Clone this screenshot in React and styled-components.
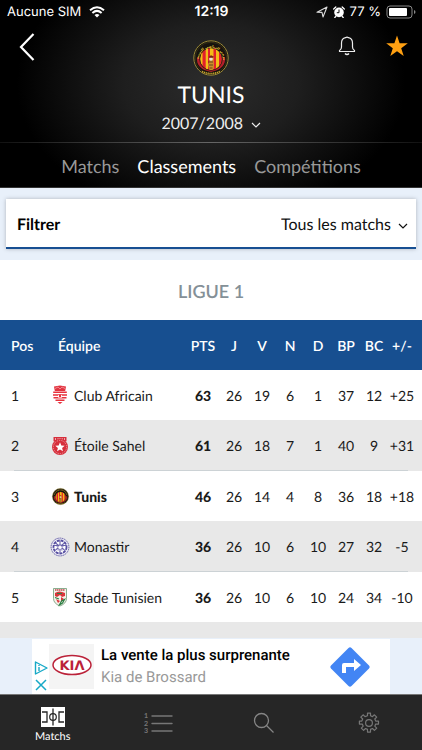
import React from "react";
import { useState } from "react";
import styled, { createGlobalStyle } from "styled-components";

const teams = [
  { pos: 1, name: "Club Africain", crest: "africain", stats: ["26", "19", "6", "1", "37", "12", "+25"], pts: 63 },
  { pos: 2, name: "Étoile Sahel", crest: "sahel", stats: ["26", "18", "7", "1", "40", "9", "+31"], pts: 61 },
  { pos: 3, name: "Tunis", crest: "tunis", stats: ["26", "14", "4", "8", "36", "18", "+18"], pts: 46, current: true },
  { pos: 4, name: "Monastir", crest: "monastir", stats: ["26", "10", "6", "10", "27", "32", "-5"], pts: 36 },
  { pos: 5, name: "Stade Tunisien", crest: "stade", stats: ["26", "10", "6", "10", "24", "34", "-10"], pts: 36 },
];

const tabs = ["Matchs", "Classements", "Compétitions"];
const statHeads = ["J", "V", "N", "D", "BP", "BC", "+/-"];

function StatusIcons() {
  return (
    <StatusRight>
      <svg width="12" height="12" viewBox="0 0 12 12" fill="none" stroke="#ddd" strokeWidth="1.1" strokeLinejoin="round">
        <path d="M1 6.2 11 1 7 11 6 6.4z" />
      </svg>
      <svg width="12" height="12" viewBox="0 0 12 12">
        <circle cx="6" cy="6.4" r="4.8" fill="#fff" />
        <path d="M.7 3 2.8 1M11.3 3 9.2 1M2.8 10.3l-1 1.2M9.2 10.3l1 1.2" stroke="#fff" strokeWidth="1.3" strokeLinecap="round" />
        <path d="M6 3.5v3.2H3.8" stroke="#111" strokeWidth="1" fill="none" />
      </svg>
      <span>77 %</span>
      <svg width="30" height="14" viewBox="0 0 30 14">
        <rect x="1" y="1" width="25" height="12" rx="3" fill="none" stroke="#888" />
        <rect x="3" y="3" width="18" height="8" rx="1" fill="#fff" />
        <path d="M28 5v4q1.500-.5 1.500-2T28 5z" fill="#888" />
      </svg>
    </StatusRight>
  );
}

function TunisCrest({ size, detailed }) {
  return (
    <svg width={size} height={size} viewBox="0 0 36 36" overflow="visible" role="img" aria-label="Tunis">
      <defs>
        <clipPath id={"stripes" + size}><circle cx="18" cy="19" r="11" /></clipPath>
        <path id={"arc" + size} d="M5.600 20a12.400 12.400 0 1 1 24.800 0" />
      </defs>
      <circle cx="18" cy="18" r="17.200" fill="#16130d" stroke="#9b8a38" strokeWidth="1" />
      <circle cx="18" cy="18" r="15.800" fill="none" stroke="#4f4720" strokeWidth=".5" />
      <path d="M4 17c-1 8 4 13 14 15 10-2 15-7 14-15l-3 1H7z" fill="#b3202a" />
      <g clipPath={"url(#stripes" + size + ")"}>
        <path d="M6 7h24v24H6z" fill="#f3bd18" />
        <path d="M9.500 7h3.200v24H9.500zM15 7h2v24h-2zM20.500 7h2.500v24h-2.500zM26 7h3v24h-3z" fill="#e3202b" />
      </g>
      <circle cx="18" cy="19" r="11.300" fill="none" stroke="#16130d" strokeWidth=".8" />
      <path d="M16 18q2-3 4.500 0l-.5 2 1 5-1.500 5h-3L15 25l1.500-4z" fill="#c98f2b" />
      <circle cx="18" cy="19" r="1.800" fill="#ece2d0" />
      <path d="m15.500 17 2.500-1.800 3 1.500-1 1h-3.500z" fill="#792618" />
      <path d="M15 22h5M16 25h4M16.500 28h3" stroke="#51301a" strokeWidth=".8" />
      <path d="M9 31.500q9 4 18 0" stroke="#caa62e" strokeWidth="1.600" strokeDasharray="1.200 .7" fill="none" />
      {detailed ? (
        <text fontSize="3.500" fontWeight="700" fontFamily="DejaVu Sans, sans-serif" fill="#f0cc3c" textAnchor="middle">
          <textPath href={"#arc" + size} startOffset="50%">الترجي الرياضي التونسي</textPath>
        </text>
      ) : (
        <path d="M5 14a13.500 13.500 0 0 1 26 0" stroke="#b8982c" strokeWidth="2" strokeDasharray="2 1" fill="none" />
      )}
    </svg>
  );
}

function Crest({ kind }) {
  if (kind === "tunis") {
    return <TunisCrest size={17} />;
  }
  if (kind === "africain") {
    return (
      <svg width="18" height="20" viewBox="0 0 18 20">
        <path d="M3 1.500 9 .5l6 1-.8 4.500H3.800z" fill="#e23440" />
        <path d="M4 3.500 7 2l2 2 2-2 3 1.500" stroke="#f6aeb2" strokeWidth=".7" fill="none" />
        <path d="M2.200 7.300h13.600M2 10h14M2.500 12.700h13M4.500 15.300h9" stroke="#e8313d" strokeWidth="1.600" />
        <path d="M7 10.200h4v2.400H7z" fill="#fff" />
        <path d="M8 9.500h2V12H8z" fill="#e8313d" />
        <path d="M6.500 17h5L9 19z" fill="#e8313d" />
      </svg>
    );
  }
  if (kind === "sahel") {
    return (
      <svg width="18" height="20" viewBox="0 0 18 20">
        <path d="M2.500 1h13v4h-13z" fill="#d62f3c" />
        <path d="M4.500 2v2m2.500-2v2m2-2v2m2.200-2v2m2.300-2v2" stroke="#f3c6c9" strokeWidth=".8" />
        <circle cx="9" cy="11" r="8" fill="#d62f3c" />
        <circle cx="9" cy="11" r="6.600" fill="none" stroke="#f0a4a9" strokeWidth=".8" strokeDasharray="1.300 1" />
        <path d="m9 6.300 1.300 3.200 3.400.2-2.600 2.200.9 3.400-3-1.900-3 1.900.9-3.400-2.600-2.200 3.400-.2z" fill="#fff" />
      </svg>
    );
  }
  if (kind === "monastir") {
    return (
      <svg width="20" height="20" viewBox="0 0 20 20">
        <circle cx="10" cy="10" r="8.900" fill="#edecf5" stroke="#5c55a3" strokeWidth="1" strokeDasharray="1.300 .6" />
        <circle cx="10" cy="10" r="6.500" fill="#fff" stroke="#554da0" strokeWidth="1.800" strokeDasharray="3 .8" />
        <path d="M10 4v12M4 8.500h12M5.500 13l9-7M14.500 13l-9-7" stroke="#6962ab" strokeWidth="1.100" />
        <path d="m10 7 1 2.200 2.300.2-1.800 1.600.6 2.300-2.100-1.300-2.100 1.300.6-2.300-1.800-1.600 2.300-.2z" fill="#fff" stroke="#554da0" strokeWidth=".5" />
      </svg>
    );
  }
  return (
    <svg width="16" height="20" viewBox="0 0 16 20">
      <path d="M1.500 1.500h13v10q0 5-6.500 7.500-6.500-2.500-6.500-7.500z" fill="#f6efe9" stroke="#6d9b75" strokeWidth=".8" />
      <path d="M3 3h10" stroke="#bf4a4d" strokeWidth="1.300" strokeDasharray="1.500 .5" />
      <path d="M3 6q4-3 10 0v3l-3 1-2-2-3 2-2-1z" fill="#d9343a" />
      <path d="m4 12 4 2-2 2zM9 10l3 2-3 3z" fill="#d9343a" />
      <path d="M3 10.500 7 12M9.500 14l3-1.500-2 3.500-3 1.800zM5 6.500h5" stroke="#2c8045" strokeWidth="1.200" fill="none" />
    </svg>
  );
}

function Chevron() {
  return (
    <ChevronSvg width="10" height="6" viewBox="0 0 10 6" aria-hidden="true">
      <path d="m1 1 4 4 4-4" fill="none" stroke="currentColor" strokeWidth="1.2" />
    </ChevronSvg>
  );
}

function NavIcon({ kind }) {
  if (kind === "pitch") {
    return (
      <svg width="26" height="20" viewBox="0 0 26 20">
        <path d="M1 0h24v20H1z" fill="#fff" />
        <path d="M2 5h5v10H2M24 5h-5v10h5M13 1.500v17" fill="none" stroke="#262626" strokeWidth="1.300" />
        <circle cx="13" cy="10" r="3.300" fill="none" stroke="#262626" strokeWidth="1.200" />
      </svg>
    );
  }
  if (kind === "list") {
    return (
      <svg width="30" height="24" viewBox="0 0 30 24">
        <path d="M9 5h20M9 12.500h20M9 20h20" stroke="#777" strokeWidth="1.400" strokeLinecap="round" />
        <text fontFamily="Lato, sans-serif" fontSize="7" fontWeight="700" fill="#777">
          <tspan x="1" y="7">1</tspan>
          <tspan x="1" y="15">2</tspan>
          <tspan x="1" y="22">3</tspan>
        </text>
      </svg>
    );
  }
  if (kind === "search") {
    return (
      <svg width="22" height="22" viewBox="0 0 22 22" fill="none" stroke="#858585" strokeWidth="1.300">
        <circle cx="8.500" cy="8.500" r="7" />
        <path d="m13.500 13.500 7 7" />
      </svg>
    );
  }
  return (
    <svg width="22" height="22" viewBox="0 0 22 22" fill="none" stroke="#777" strokeWidth="1.200" strokeLinejoin="round">
      <circle cx="11" cy="11" r="3.400" />
      <path d="M9.500 1.200h3v2.500l2 .9 1.900-1.800 2.300 2.300-1.900 1.900.9 2.100h2.800v3h-2.800l-.9 2.100 1.900 1.900-2.300 2.300-1.900-1.900-2 .9v2.700h-3v-2.700l-2-.9-1.900 1.900-2.300-2.300 1.900-1.900-.9-2.100H1.400v-3h2.400l.9-2.100-1.900-1.900 2.300-2.300L7 4.600l2.500-.9z" />
    </svg>
  );
}

const navItems = [
  { kind: "pitch", name: "Matchs", active: true },
  { kind: "list", name: "Classements" },
  { kind: "search", name: "Recherche" },
  { kind: "settings", name: "Réglages" },
];

export default function App() {
  const [tab, setTab] = useState("Classements");
  const [season, setSeason] = useState("2007/2008");
  const [filter, setFilter] = useState("Tous les matchs");

  return (
    <Page>
      <GlobalStyle />
      <Header>
        <StatusBar>
          <StatusLeft>
            <span>Aucune SIM</span>
            <svg width="16" height="12" viewBox="0 0 16 12" fill="none" stroke="#fff" strokeWidth="2">
              <path d="M1 4.200q7-6 14 0M3.400 6.900q4.600-4 9.200 0" />
              <path d="M5.500 9q2.500-2 5 0L8 11.600z" fill="#fff" stroke="none" />
            </svg>
          </StatusLeft>
          <Clock>12:19</Clock>
          <StatusIcons />
        </StatusBar>
        <TeamBar>
          <BackButton aria-label="Retour">
            <svg width="16" height="28" viewBox="0 0 16 28" fill="none" stroke="#fff" strokeWidth="2.200">
              <path d="M14.500 1 2 14l12.500 13" />
            </svg>
          </BackButton>
          <TeamInfo>
            <TunisCrest size={36} detailed />
            <TeamName>TUNIS</TeamName>
            <Picker $light>
              <Select aria-label="Saison" value={season} onChange={(e) => setSeason(e.target.value)}>
                <option>2007/2008</option>
              </Select>
              <Chevron />
            </Picker>
          </TeamInfo>
          <Actions>
            <button aria-label="Notifications">
              <svg width="18" height="20" viewBox="0 0 18 20" fill="none" stroke="#eee" strokeWidth="1.200" strokeLinejoin="round">
                <path d="M1.500 15.500v-1q2-1 2-3.500V7q0-4.500 4-5.300Q9 .4 10.500 1.700q4 .8 4 5.300v4q0 2.500 2 3.500v1z" />
                <path d="M7 17.500q2 2 4 0" strokeWidth="1.500" />
              </svg>
            </button>
            <button aria-label="Favori">
              <svg width="22" height="22" viewBox="0 0 22 22">
                <path d="m11 .5 2.600 7.800h8.200l-6.600 4.900 2.500 7.900-6.700-4.900-6.700 4.900 2.500-7.900L.2 8.300h8.200z" fill="#ffa012" />
              </svg>
            </button>
          </Actions>
        </TeamBar>
        <Tabs>
          {tabs.map((t) => (
            <TabButton key={t} $active={t === tab} onClick={() => setTab(t)}>{t}</TabButton>
          ))}
        </Tabs>
      </Header>

      <FilterArea>
        <FilterCard>
          <FilterLabel htmlFor="filter">Filtrer</FilterLabel>
          <Picker>
            <Select id="filter" value={filter} onChange={(e) => setFilter(e.target.value)}>
              <option>Tous les matchs</option>
            </Select>
            <Chevron />
          </Picker>
        </FilterCard>
      </FilterArea>

      <League>LIGUE 1</League>

      <Standings>
        <thead>
          <tr>
            <PosHead>Pos</PosHead>
            <TeamHead>Équipe</TeamHead>
            <PtsHead>PTS</PtsHead>
            {statHeads.map((h) => (
              <StatHead key={h}>{h}</StatHead>
            ))}
          </tr>
        </thead>
        <tbody>
          {teams.map((team) => (
            <Row key={team.pos}>
              <PosCell>{team.pos}</PosCell>
              <TeamCell>
                <Team $current={team.current}>
                  <CrestBox><Crest kind={team.crest} /></CrestBox>
                  {team.name}
                </Team>
              </TeamCell>
              <PtsCell>{team.pts}</PtsCell>
              {team.stats.map((s, i) => (
                <StatCell key={i}>{s}</StatCell>
              ))}
            </Row>
          ))}
        </tbody>
      </Standings>
      <TableEnd />

      <AdArea>
        <Ad href="#">
          <AdMarks>
            <svg width="14" height="14" viewBox="0 0 14 14" fill="none" stroke="#16a9c7" strokeWidth="1.400" strokeLinejoin="round">
              <path d="M1.500 1 13 7 1.500 13z" />
              <path d="M5 6v4M5 4v1" />
            </svg>
            <svg width="12" height="12" viewBox="0 0 12 12" stroke="#16a9c7" strokeWidth="1.500">
              <path d="m1 1 10 10M11 1 1 11" />
            </svg>
          </AdMarks>
          <AdLogo>
            <svg width="40" height="22" viewBox="0 0 40 22" role="img" aria-label="Kia">
              <ellipse cx="20" cy="11" rx="19" ry="9.500" fill="#fff" stroke="#bb2239" strokeWidth="1.500" />
              <text x="20" y="15.500" textAnchor="middle" fontFamily="DejaVu Sans, sans-serif" fontWeight="700" fontSize="13" fill="#bb2239">KIΛ</text>
            </svg>
          </AdLogo>
          <AdText>
            <AdTitle>La vente la plus surprenante</AdTitle>
            <AdSub>Kia de Brossard</AdSub>
          </AdText>
          <svg width="40" height="40" viewBox="0 0 40 40">
            <path d="M18.500 1q1.500-1.300 3 0L39 18.500q1.300 1.500 0 3L21.500 39q-1.500 1.300-3 0L1 21.500q-1.300-1.500 0-3z" fill="#4285f4" />
            <path d="M12 26v-8q0-2 2-2h10v-4l7 6-7 6v-4h-8v6z" fill="#fff" />
          </svg>
        </Ad>
      </AdArea>

      <Nav>
        {navItems.map((item) => (
          <NavButton key={item.kind} aria-label={item.name} $active={item.active}>
            <NavIcon kind={item.kind} />
            {item.active && <span>{item.name}</span>}
          </NavButton>
        ))}
      </Nav>
    </Page>
  );
}

const GlobalStyle = createGlobalStyle`
  * {
    box-sizing: border-box;
  }
  body {
    margin: 0;
    background: #e8f0fa;
    font-family: Lato, "Liberation Sans", sans-serif;
    text-rendering: geometricPrecision;
  }
  button, select {
    font-family: inherit;
    text-rendering: inherit;
    border: none;
    background: none;
    padding: 0;
    margin: 0;
    cursor: pointer;
  }
  svg {
    display: block;
    flex-shrink: 0;
  }
`;

const Page = styled.div`
  min-height: 100vh;
  display: flex;
  flex-direction: column;
`;

const Header = styled.header`
  color: #fff;
  background: radial-gradient(ellipse 46% 72% at 50% 45%, #2c2c2c 0%, #1e1e1e 45%, #000 100%);
  border-bottom: 1px solid #333;
`;

const StatusBar = styled.div`
  display: grid;
  grid-template-columns: 1fr auto 1fr;
  align-items: center;
  height: 23px;
  padding: 0 6px 0 7px;
  font-family: Inter, "Liberation Sans", sans-serif;
  font-size: 13px;
`;

const StatusLeft = styled.div`
  display: flex;
  align-items: center;
  gap: 8px;
`;

const StatusRight = styled.div`
  display: flex;
  align-items: center;
  justify-content: flex-end;
  gap: 5px;
  white-space: nowrap;
`;

const Clock = styled.span`
  font-size: 14px;
  font-weight: 600;
`;

const TeamBar = styled.div`
  display: grid;
  grid-template-columns: 1fr auto 1fr;
  align-items: start;
  height: 120px;
  padding: 10px 14px 0;
  border-bottom: 1px solid #4a4a4a;
  border-image: linear-gradient(90deg, #111, #666, #111) 1;
`;

const BackButton = styled.button`
  justify-self: start;
  padding-left: 5px;
`;

const TeamInfo = styled.div`
  display: flex;
  flex-direction: column;
  align-items: center;
  padding-top: 7px;
`;

const TeamName = styled.h1`
  margin: 4px 0;
  font-size: 23px;
  font-weight: 400;
  line-height: 28px;
`;

const Actions = styled.div`
  display: flex;
  justify-content: flex-end;
  align-items: center;
  gap: 30px;
  padding-top: 2px;
`;

const Picker = styled.div`
  display: flex;
  align-items: center;
  gap: 7px;
  color: ${(props) => (props.$light ? "#eee" : "#111")};
`;

const Select = styled.select`
  appearance: none;
  color: inherit;
  font-size: 16px;
  line-height: 24px;
`;

const ChevronSvg = styled.svg`
  margin-top: 2px;
`;

const Tabs = styled.nav`
  display: flex;
  justify-content: center;
  gap: 18px;
  height: 44px;
  padding-bottom: 4px;
`;

const TabButton = styled.button`
  font-size: 18px;
  padding-top: 6px;
  color: ${(props) => (props.$active ? "#fff" : "#999")};
`;

const FilterArea = styled.div`
  padding: 11px 6px;
  background: #e8f0fa;
`;

const FilterCard = styled.div`
  display: flex;
  align-items: center;
  justify-content: space-between;
  height: 50px;
  padding: 3px 8px 0 11px;
  background: #fff;
  border-bottom: 2px solid #174f92;
  box-shadow: 0 0 4px rgba(0, 0, 0, 0.25);
`;

const FilterLabel = styled.label`
  font-size: 16px;
  font-weight: 700;
`;

const League = styled.h2`
  margin: 0;
  padding-top: 2px;
  background: #fff;
  color: #849097;
  font-size: 18px;
  font-weight: 600;
  line-height: 58px;
  text-align: center;
`;

const Standings = styled.table`
  width: 100%;
  table-layout: fixed;
  border-collapse: collapse;
  background: #fff;
  color: #1a1a1a;
  font-size: 14px;
`;

const HeadCell = styled.th`
  height: 50px;
  padding: 0;
  background: #174f90;
  color: #fff;
  font-weight: 600;
`;

const PosHead = styled(HeadCell)`
  width: 50px;
  padding-left: 11px;
  text-align: left;
`;

const TeamHead = styled(HeadCell)`
  padding-left: 8px;
  text-align: left;
`;

const PtsHead = styled(HeadCell)`
  width: 34px;
`;

const StatHead = styled(HeadCell)`
  width: 28px;
  &:last-child {
    width: 34px;
    padding-right: 6px;
  }
`;

const Row = styled.tr`
  height: 50px;
  &:nth-child(even) {
    height: 51px;
    background: linear-gradient(90deg, transparent 14px, #ccd2d5 14px, #ccd2d5 calc(100% - 14px), transparent calc(100% - 14px)) bottom / 100% 1px no-repeat #e8e8e8;
  }
`;

const Cell = styled.td`
  padding: 0;
  text-align: center;
`;

const PosCell = styled(Cell)`
  padding-left: 11px;
  text-align: left;
`;

const TeamCell = styled(Cell)`
  text-align: left;
`;

const Team = styled.div`
  display: flex;
  align-items: center;
  gap: 4px;
  white-space: nowrap;
  font-weight: ${(props) => (props.$current ? 900 : 400)};
`;

const CrestBox = styled.span`
  display: flex;
  justify-content: center;
  width: 20px;
`;

const PtsCell = styled(Cell)`
  font-weight: 900;
`;

const StatCell = styled(Cell)`
  &:last-child {
    padding-right: 6px;
  }
`;

const TableEnd = styled.div`
  flex: 1;
  min-height: 16px;
  background: #e8e8e8;
`;

const AdArea = styled.div`
  display: flex;
  justify-content: center;
  padding: 1px 32px 0;
  background: #e8f0fa;
`;

const Ad = styled.a`
  display: flex;
  align-items: center;
  flex: 1;
  height: 55px;
  padding-right: 20px;
  background: #fff;
  color: #000;
  text-decoration: none;
  font-family: Roboto, "Liberation Sans", sans-serif;
`;

const AdMarks = styled.div`
  display: flex;
  flex-direction: column;
  align-items: center;
  justify-content: flex-end;
  gap: 4px;
  width: 17px;
  height: 100%;
  padding-bottom: 3px;
`;

const AdLogo = styled.div`
  display: flex;
  align-items: center;
  justify-content: center;
  width: 45px;
  height: 45px;
  padding-bottom: 4px;
  background: #f4f4f4;
`;

const AdText = styled.div`
  flex: 1;
  padding: 0 0 2px 7px;
  white-space: nowrap;
`;

const AdTitle = styled.div`
  font-size: 15px;
  font-weight: 500;
  line-height: 22px;
`;

const AdSub = styled.div`
  color: #999;
  font-size: 15px;
  line-height: 22px;
`;

const Nav = styled.nav`
  display: grid;
  grid-template-columns: repeat(4, 1fr);
  height: 56px;
  background: #262626;
  border-top: 1px solid #777;
`;

const NavButton = styled.button`
  display: flex;
  flex-direction: column;
  align-items: center;
  justify-content: center;
  gap: 2px;
  padding-top: ${(props) => (props.$active ? "6px" : "0")};
  color: #fff;
  font-size: 11px;
  line-height: 16px;
`;
